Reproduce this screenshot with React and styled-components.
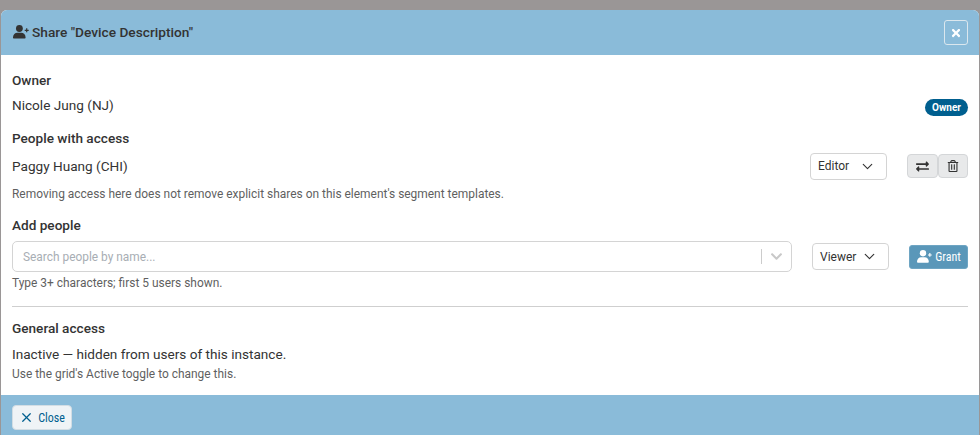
import React from "react";
import styled, { createGlobalStyle } from "styled-components";
import { FaTimes, FaExchangeAlt, FaRegTrashAlt, FaChevronDown } from "react-icons/fa";
import { LuChevronDown, LuX } from "react-icons/lu";

const Global = createGlobalStyle`
  html, body { margin: 0; padding: 0; height: 435px; overflow: hidden; }
  body { font-family: Roboto, "Liberation Sans", sans-serif; color: #333; background: #9a9696; }
  * { box-sizing: border-box; }
`;
const Backdrop = styled.div`
  height: 435px;
  padding: 10px 1px 0 1px;
  background: #9a9696;
`;
const Modal = styled.div`
  height: 425px;
  display: flex;
  flex-direction: column;
  background: #fff;
  border-radius: 6px 6px 0 0;
  overflow: hidden;
`;
const Header = styled.header`
  height: 45px;
  flex: none;
  display: flex;
  align-items: center;
  justify-content: space-between;
  padding: 0 11px 0 12px;
  background: #8abbd9;
`;
const Title = styled.h1`
  margin: 0 0 2px;
  display: flex;
  align-items: center;
  gap: 3px;
  font-size: 13.7px;
  font-weight: 500;
  color: #333;
`;
const CloseX = styled.button`
  width: 24px;
  height: 25px;
  padding: 0;
  display: flex;
  align-items: center;
  justify-content: center;
  background: transparent;
  border: 1px solid #dbe7ee;
  border-radius: 3px;
  color: #fff;
  font-size: 12px;
`;
const Body = styled.main`
  flex: 1;
  padding: 0 11px;
  display: flex;
  flex-direction: column;
`;
const Label = styled.div`
  font-size: 13.6px;
  font-weight: 500;
  line-height: 16px;
  color: #333;
  margin-top: ${p => p.$top}px;
`;
const Row = styled.div`
  display: flex;
  align-items: center;
  justify-content: space-between;
  margin-top: ${p => p.$top || 0}px;
  height: ${p => p.$h}px;
`;
const Name = styled.span`
  font-size: 13.6px;
  color: #333;
`;
const StatusLine = styled(Name)`
  margin-top: 10px;
  line-height: 16px;
`;
const Badge = styled.span`
  height: 17px;
  padding: 0 7px;
  margin-top: 5px;
  display: inline-flex;
  align-items: center;
  border-radius: 9px;
  background: #005f8f;
  color: #fff;
  font-size: 10px;
  font-weight: 700;
`;
const Select = styled.div`
  width: 77px;
  height: 27px;
  padding: 0 10px 0 7px;
  margin-right: 20px;
  display: flex;
  align-items: center;
  justify-content: space-between;
  border: 1px solid #d4d4d4;
  border-radius: 4px;
  background: #fff;
  font-size: 12px;
  color: #333;
  svg { font-size: 17px; stroke-width: 1.6; }
`;
const Controls = styled.div`
  display: flex;
  align-items: center;
`;
const IconBtn = styled.button`
  width: ${p => p.$w}px;
  height: 24px;
  padding: 0;
  display: flex;
  align-items: center;
  justify-content: center;
  background: #e8e9ea;
  border: 1px solid #d4d6d8;
  border-radius: 4px;
  color: #333;
  font-size: ${p => p.$icon}px;
`;
const Hint = styled.div`
  font-size: 11.95px;
  line-height: 14px;
  color: #5f5f5f;
  margin-top: ${p => p.$top || 0}px;
`;
const Combo = styled.div`
  width: 780px;
  height: 31px;
  display: flex;
  align-items: center;
  padding-left: 10px;
  border: 1px solid #d4d4d4;
  border-radius: 5px;
  background: #fff;
`;
const Placeholder = styled.span`
  flex: 1;
  font-size: 11.9px;
  color: #a8aeb4;
`;
const ComboSep = styled.span`
  width: 1px;
  height: 15px;
  background: #ccc;
`;
const ComboArrow = styled.span`
  width: 29px;
  display: flex;
  justify-content: center;
  color: #c8c8c8;
  font-size: 13px;
`;
const Grant = styled.button`
  width: 59px;
  height: 24px;
  padding: 0 0 0 1px;
  display: flex;
  align-items: center;
  justify-content: center;
  gap: 3px;
  background: #5a97b9;
  border: 1px solid #6ea5c3;
  border-radius: 3px;
  color: #fff;
  font-family: inherit;
  font-size: 12px;
  font-stretch: 85%;
`;
const Divider = styled.hr`
  width: 100%;
  margin: 16px 0 0;
  border: 0;
  border-top: 1px solid #cfcfcf;
`;
const Footer = styled.footer`
  height: 40px;
  flex: none;
  display: flex;
  align-items: center;
  padding: 5px 11px 0;
  background: #8abbd9;
`;
const CloseBtn = styled.button`
  width: 60px;
  height: 25px;
  padding: 0;
  display: flex;
  align-items: center;
  justify-content: center;
  gap: 4px;
  background: #eff3f6;
  border: 1px solid #d2dde4;
  border-radius: 4px;
  color: #005f8f;
  font-family: inherit;
  font-size: 12px;
  font-stretch: 85%;
  svg { font-size: 15px; }
`;

const UserPlus = ({ width }) => (
  <svg width={width} height={(width * 14) / 16} viewBox="0 0 16 14" fill="currentColor" aria-hidden="true">
    <circle cx="6.4" cy="3.5" r="3.4" />
    <path d="M1 13.6C.4 13.6 0 13.2 0 12.6 0 9.8 2 7.8 4.4 7.8H8.2C10.6 7.8 12.6 9.8 12.6 12.6 12.6 13.2 12.2 13.6 11.6 13.6Z" />
    <path d="M13.7 3.3V7.3M11.7 5.3H15.7" stroke="currentColor" strokeWidth="1.2" fill="none" />
  </svg>
);

export default function App() {
  return (
    <>
      <Global />
      <Backdrop>
        <Modal>
          <Header>
            <Title><UserPlus width={16} />Share "Device Description"</Title>
            <CloseX aria-label="Close"><FaTimes /></CloseX>
          </Header>
          <Body>
            <Label $top={17}>Owner</Label>
            <Row $top={5} $h={24}>
              <Name>Nicole Jung (NJ)</Name>
              <Badge>Owner</Badge>
            </Row>
            <Label $top={13}>People with access</Label>
            <Row $top={4} $h={32}>
              <Name>Paggy Huang (CHI)</Name>
              <Controls>
                <Select>Editor<LuChevronDown /></Select>
                <IconBtn $w={31} $icon={13}><FaExchangeAlt /></IconBtn>
                <IconBtn $w={30} $icon={12}><FaRegTrashAlt /></IconBtn>
              </Controls>
            </Row>
            <Hint $top={5}>Removing access here does not remove explicit shares on this element's segment templates.</Hint>
            <Label $top={16}>Add people</Label>
            <Row $top={8} $h={31}>
              <Combo>
                <Placeholder>Search people by name...</Placeholder>
                <ComboSep />
                <ComboArrow><FaChevronDown /></ComboArrow>
              </Combo>
              <Controls>
                <Select>Viewer<LuChevronDown /></Select>
                <Grant><UserPlus width={15} />Grant</Grant>
              </Controls>
            </Row>
            <Hint $top={4}>Type 3+ characters; first 5 users shown.</Hint>
            <Divider />
            <Label $top={13}>General access</Label>
            <StatusLine>Inactive — hidden from users of this instance.</StatusLine>
            <Hint $top={5}>Use the grid's Active toggle to change this.</Hint>
          </Body>
          <Footer>
            <CloseBtn><LuX />Close</CloseBtn>
          </Footer>
        </Modal>
      </Backdrop>
    </>
  );
}
